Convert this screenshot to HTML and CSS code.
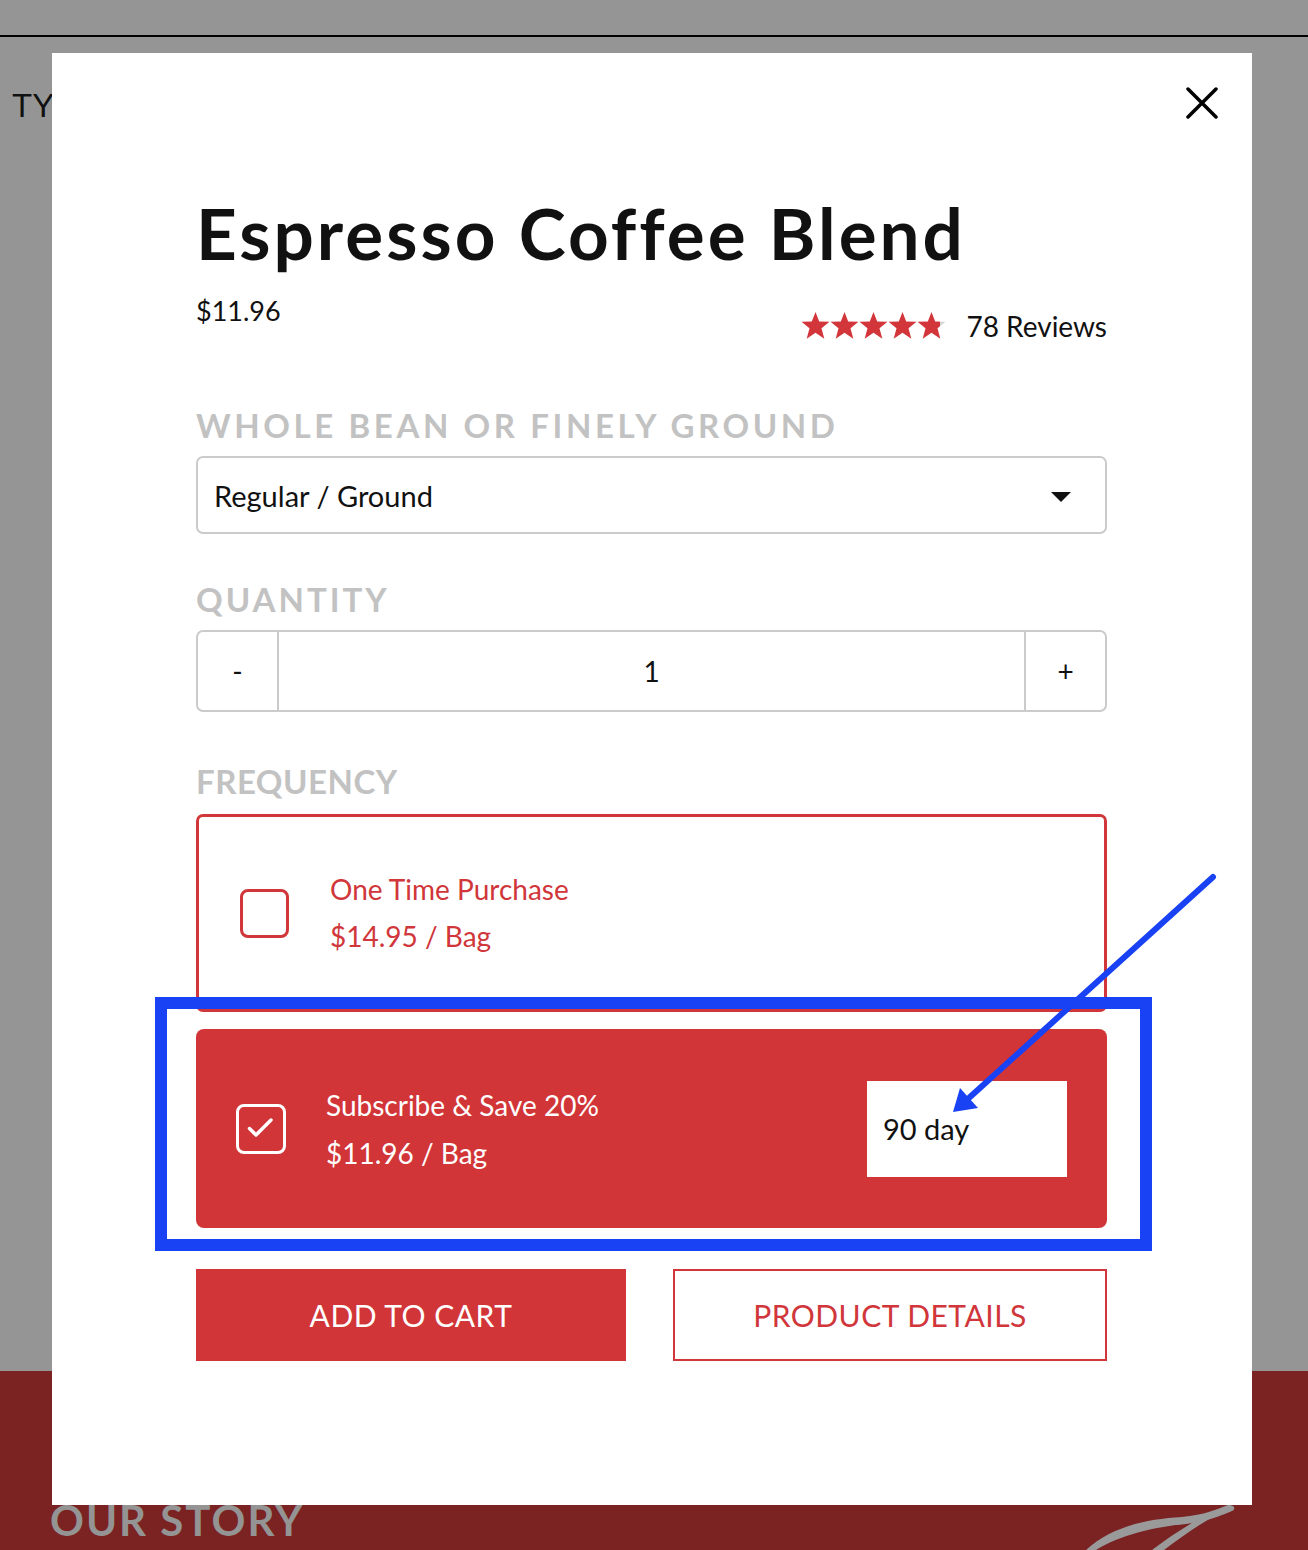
FILE: index.html
```html
<!DOCTYPE html>
<html lang="en">
<head>
  <meta charset="UTF-8">
  <meta name="viewport" content="width=device-width, initial-scale=1.0">
  <title>Espresso Coffee Blend</title>
  <link rel="stylesheet" href="styles.css">
</head>
<body>

<div id="page">
  <div id="topbar"></div>
  <div id="page-heading">TYPE</div>
</div>

<div id="story">
  <div class="story-title">OUR STORY</div>
  <svg class="story-mark" width="150" height="45" viewBox="0 0 150 45">
    <path d="M0 45 C25 22 60 14 96 12 C118 10 132 4 142 0 C149 0 150 4 146 6 C132 12 118 17 100 19 C68 22 34 30 10 45 Z" fill="#9a9a9a"/>
    <path d="M124 7 C104 19 84 31 66 45 L78 45 C95 32 112 20 132 9 Z" fill="#9a9a9a"/>
  </svg>
</div>

<div id="modal">
  <button class="close" aria-label="Close">
    <svg width="32" height="32" viewBox="0 0 32 32">
      <path d="M2 2 L30 30 M30 2 L2 30" stroke="#000" stroke-width="3.5" stroke-linecap="round"/>
    </svg>
  </button>

  <h1 class="title">Espresso Coffee Blend</h1>

  <div class="price-row">
    <div class="price">$11.96</div>
    <div class="rating">
      <svg class="stars" width="145" height="28" viewBox="0 0 145 28">
        <defs>
          <linearGradient id="part">
            <stop offset="82%" stop-color="#d3363a"/>
            <stop offset="82%" stop-color="#d6d6d6"/>
          </linearGradient>
          <path id="star" d="M14.5 0 L18.2 9.4 L28.5 9.8 L20.5 16.2 L23.3 26.8 L14.5 20.8 L5.7 26.8 L8.5 16.2 L0.5 9.8 L10.8 9.4 Z"/>
        </defs>
        <use href="#star" x="0" fill="#d3363a"/>
        <use href="#star" x="29" fill="#d3363a"/>
        <use href="#star" x="58" fill="#d3363a"/>
        <use href="#star" x="87" fill="#d3363a"/>
        <use href="#star" x="116" fill="url(#part)"/>
      </svg>
      <span class="reviews">78 Reviews</span>
    </div>
  </div>

  <div class="label label-first">WHOLE BEAN OR FINELY GROUND</div>
  <div class="select">
    <span>Regular / Ground</span>
    <span class="caret"></span>
  </div>

  <div class="label label-qty">QUANTITY</div>
  <div class="quantity">
    <div class="qty-btn">-</div>
    <div class="qty-value">1</div>
    <div class="qty-btn">+</div>
  </div>

  <div class="label label-freq">FREQUENCY</div>

  <div class="option option-once">
    <div class="checkbox"></div>
    <div class="option-text">
      <div>One Time Purchase</div>
      <div>$14.95 / Bag</div>
    </div>
  </div>

  <div class="option option-sub">
    <div class="checkbox checked">
      <svg width="44" height="44" viewBox="0 0 44 44">
        <path d="M10.5 21.5 L17 28 L32 13" fill="none" stroke="#fff" stroke-width="3.5" stroke-linecap="round" stroke-linejoin="round"/>
      </svg>
    </div>
    <div class="option-text">
      <div>Subscribe &amp; Save 20%</div>
      <div>$11.96 / Bag</div>
    </div>
    <div class="interval">90 day</div>
  </div>

  <div class="actions">
    <button class="btn btn-cart">ADD TO CART</button>
    <button class="btn btn-details">PRODUCT DETAILS</button>
  </div>
</div>

<!-- annotation drawn over the screenshot -->
<div id="highlight"></div>
<svg id="arrow" width="1308" height="1550" viewBox="0 0 1308 1550">
  <line x1="1213" y1="877" x2="970" y2="1097" stroke="#1a42f5" stroke-width="6" stroke-linecap="round"/>
  <polygon points="953,1112 960,1088 978,1108" fill="#1a42f5"/>
</svg>

</body>
</html>
```

FILE: styles.css
```css
body {
  margin: 0;
  width: 1308px;
  height: 1550px;
  position: relative;
  overflow: hidden;
  background-color: #959595;
  font-family: 'Lato', 'Liberation Sans', sans-serif;
}

#page {
  height: 1371px;
}

#topbar {
  height: 35px;
  border-bottom: 2px solid #000;
}

#page-heading {
  margin-top: 50px;
  padding-left: 12px;
  font-family: 'Liberation Sans', Arial, sans-serif;
  font-size: 33px;
  line-height: 38px;
  color: #111;
}

#story {
  height: 179px;
  background-color: #7b2322;
  display: flex;
  justify-content: space-between;
  padding: 0 72px 0 50px;
  box-sizing: border-box;
}

.story-title {
  padding-top: 124px;
  font-size: 42px;
  line-height: 50px;
  font-weight: 700;
  letter-spacing: 2px;
  color: #949494;
}

.story-mark {
  margin-top: 134px;
}

#modal {
  position: absolute;
  top: 53px;
  left: 52px;
  width: 1200px;
  height: 1452px;
  background-color: #fff;
  padding: 0 145px 0 144px;
  box-sizing: border-box;
}

.close {
  position: absolute;
  top: 34px;
  right: 34px;
  padding: 0;
  border: none;
  background: none;
  cursor: pointer;
}

.title {
  margin: 138px 0 0;
  font-size: 71px;
  line-height: 84px;
  font-weight: 700;
  letter-spacing: 3px;
  color: #111;
}

.price-row {
  display: flex;
  justify-content: space-between;
  margin-top: 18px;
}

.price {
  font-size: 27px;
  line-height: 36px;
  color: #111;
}

.rating {
  display: flex;
  align-items: center;
  margin-top: 15px;
}

.stars {
  display: block;
}

.reviews {
  margin-left: 20px;
  font-size: 28px;
  line-height: 36px;
  color: #111;
}

.label {
  font-size: 33px;
  line-height: 40px;
  font-weight: 700;
  letter-spacing: 3.6px;
  color: #c2c2c2;
}

.label-first {
  margin-top: 61px;
}

.label-qty {
  margin-top: 45px;
  letter-spacing: 3px;
}

.label-freq {
  margin-top: 49px;
  letter-spacing: 0.5px;
}

.select {
  margin-top: 11px;
  height: 78px;
  border: 2px solid #cbcbcb;
  border-radius: 7px;
  box-sizing: border-box;
  display: flex;
  align-items: center;
  justify-content: space-between;
  padding: 0 34px 0 16px;
  font-size: 29px;
  color: #111;
}

.caret {
  width: 0;
  height: 0;
  border-left: 10px solid transparent;
  border-right: 10px solid transparent;
  border-top: 10px solid #111;
  margin-top: 4px;
}

.quantity {
  margin-top: 11px;
  height: 82px;
  border: 2px solid #cbcbcb;
  border-radius: 7px;
  box-sizing: border-box;
  display: flex;
  font-size: 28px;
  color: #111;
}

.qty-btn {
  width: 79px;
  display: flex;
  align-items: center;
  justify-content: center;
}

.qty-value {
  flex: 1;
  display: flex;
  align-items: center;
  justify-content: center;
  border-left: 2px solid #cbcbcb;
  border-right: 2px solid #cbcbcb;
}

.option {
  display: flex;
  align-items: center;
  box-sizing: border-box;
  font-size: 28px;
  line-height: 47px;
}

.option-once {
  margin-top: 13px;
  height: 198px;
  border: 3px solid #d0363a;
  border-radius: 7px;
  padding-left: 41px;
  color: #d0363a;
}

.option-sub {
  margin-top: 17px;
  height: 199px;
  border-radius: 8px;
  background-color: #d23538;
  padding: 0 40px;
  color: #fff;
}

.checkbox {
  width: 49px;
  height: 49px;
  border: 3px solid #d0363a;
  border-radius: 8px;
  box-sizing: border-box;
  margin-right: 41px;
  flex-shrink: 0;
}

.checkbox.checked {
  width: 50px;
  height: 50px;
  border-color: #fff;
  margin-right: 40px;
}

.checkbox.checked svg {
  display: block;
}

.option-sub .option-text {
  flex: 1;
  line-height: 48px;
}

.interval {
  width: 200px;
  height: 96px;
  background-color: #fff;
  color: #111;
  display: flex;
  align-items: center;
  padding-left: 16px;
  box-sizing: border-box;
  font-size: 29px;
}

.actions {
  display: flex;
  justify-content: space-between;
  margin-top: 41px;
}

.btn {
  height: 92px;
  font-family: 'Lato', 'Liberation Sans', sans-serif;
  font-size: 30px;
  letter-spacing: 0.5px;
  box-sizing: border-box;
  cursor: pointer;
}

.btn-cart {
  width: 430px;
  border: none;
  background-color: #d23538;
  color: #fff;
}

.btn-details {
  width: 434px;
  border: 2px solid #d0363a;
  background-color: #fff;
  color: #d0363a;
}

#highlight {
  position: absolute;
  left: 155px;
  top: 997px;
  width: 997px;
  height: 254px;
  border: 12px solid #1a42f5;
  box-sizing: border-box;
}

#arrow {
  position: absolute;
  left: 0;
  top: 0;
  pointer-events: none;
}
```
